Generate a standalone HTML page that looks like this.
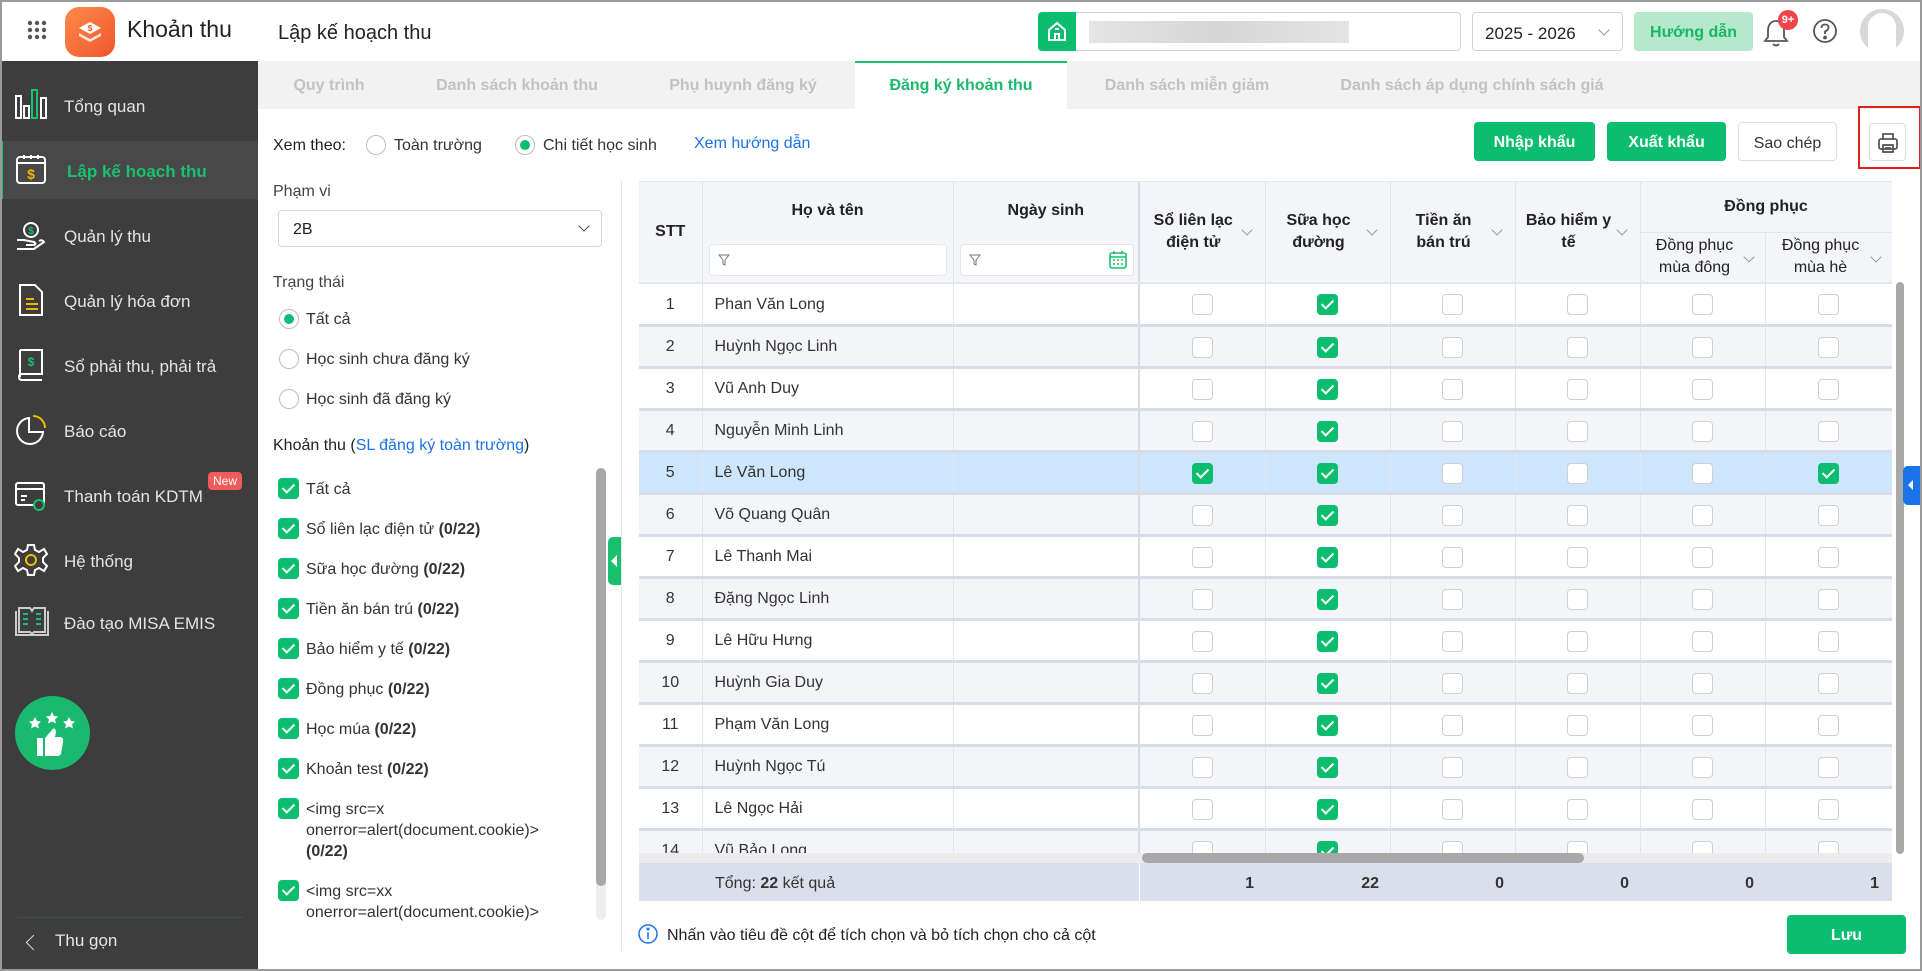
<!DOCTYPE html>
<html><head><meta charset="utf-8">
<style>
*{box-sizing:border-box;margin:0;padding:0}
body{width:1922px;height:971px;overflow:hidden;font-family:"Liberation Sans","DejaVu Sans",sans-serif;font-size:16px;color:#222;background:#fff;position:relative}
.a{position:absolute}
.frame{position:absolute;left:0;top:0;width:1922px;height:971px;border:2px solid #9a9a9a;pointer-events:none;z-index:50}
.side{left:0;top:61px;width:258px;height:910px;background:#3d3d3d}
.si{position:absolute;left:0;width:258px;height:58px;color:#e4e4e4;font-size:17px;line-height:62px;padding-left:64px}
.si svg{position:absolute;left:14px;top:12px}
.tabs{left:258px;top:61px;width:1664px;height:48px;background:#f2f2f2}
.tab{position:absolute;top:0;height:48px;line-height:50px;color:#c2c2c2;font-size:16px;font-weight:bold;transform:translateX(-50%);white-space:nowrap}
.btn{position:absolute;top:122px;height:39px;border-radius:4px;line-height:41px;text-align:center;font-size:16px;font-weight:bold;color:#fff;background:#0cbd6f}
.radio{position:absolute;width:20px;height:20px;border:1px solid #bdbdbd;border-radius:50%;background:#fff}
.radio.on::after{content:"";position:absolute;left:4px;top:4px;width:10px;height:10px;border-radius:50%;background:#0cbd6f}
.cb{display:inline-block;width:21px;height:21px;border:1px solid #cfcfcf;border-radius:4px;background:#fff;vertical-align:middle;position:relative}
.cb.on{background:#0cbd6f;border-color:#0cbd6f}
.cb.on::after{content:"";position:absolute;left:6px;top:2px;width:5px;height:10px;border:solid #fff;border-width:0 2px 2px 0;transform:rotate(45deg)}
.lc{position:absolute;left:278px;font-size:16px;color:#333;line-height:21px}
.lc .cb{position:absolute;left:0;top:0}
.lc span.t{position:absolute;left:28px;top:1px;white-space:nowrap}
table{border-collapse:collapse;table-layout:fixed}
td,th{overflow:hidden;white-space:nowrap}
.tb td{height:42px;border-bottom:3px solid #d9dbe8;border-right:1px solid #e3e5ee;font-size:16px;color:#333;padding-top:2px}
.tb tr:nth-child(even) td{background:#f4f5f9}
.tb tr.sel td{background:#cde6fb}
.tb td.c{text-align:center}
.tb td.n{padding-left:12px}
.hd{background:#f4f5f8;font-weight:bold;font-size:16px;color:#222;text-align:center}
.chev{position:absolute;width:8px;height:8px;border-right:1.5px solid #999;border-bottom:1.5px solid #999;transform:rotate(45deg)}
</style></head><body>

<div class="a" style="left:0;top:0;width:1922px;height:61px;background:#fff;box-shadow:0 1px 3px rgba(0,0,0,.08)"></div>
<svg class="a" style="left:27px;top:20px" width="20" height="20" viewBox="0 0 20 20" fill="#555"><circle cx="3" cy="3" r="2.2"/><circle cx="10" cy="3" r="2.2"/><circle cx="17" cy="3" r="2.2"/><circle cx="3" cy="10" r="2.2"/><circle cx="10" cy="10" r="2.2"/><circle cx="17" cy="10" r="2.2"/><circle cx="3" cy="17" r="2.2"/><circle cx="10" cy="17" r="2.2"/><circle cx="17" cy="17" r="2.2"/></svg>
<div class="a" style="left:65px;top:7px;width:50px;height:50px;border-radius:14px;background:linear-gradient(135deg,#ff8a4c,#f0562c)"></div>
<svg class="a" style="left:74px;top:16px" width="32" height="32" viewBox="0 0 32 32"><path d="M16 6 L27 12 L16 18 L5 12Z" fill="#fff"/><path d="M5 17 L16 23 L27 17 L27 20 L16 26 L5 20Z" fill="#fde3d5"/><text x="16" y="15" font-size="8" fill="#f0562c" text-anchor="middle" font-family="Liberation Sans" font-weight="bold">$</text></svg>
<div class="a" style="left:127px;top:16px;font-size:23px;color:#222">Khoản thu</div>
<div class="a" style="left:278px;top:22px;font-size:20px;color:#222">Lập kế hoạch thu</div>

<div class="a" style="left:1038px;top:12px;width:423px;height:39px;border:1px solid #d0d0d0;border-radius:4px;background:#fff"></div>
<div class="a" style="left:1038px;top:12px;width:38px;height:39px;background:#0cbd6f;border-radius:4px 0 0 4px"></div>
<svg class="a" style="left:1046px;top:20px" width="22" height="22" viewBox="0 0 22 22" fill="none" stroke="#fff" stroke-width="2"><path d="M3 10 L11 3 L19 10 V20 H3Z"/><path d="M9 20 V14 H13 V20"/><path d="M9 9 H13"/></svg>
<div class="a" style="left:1089px;top:21px;width:260px;height:22px;background:linear-gradient(90deg,#e4e4e4,#d6d6d6,#e4e4e4)"></div>
<div class="a" style="left:1472px;top:12px;width:151px;height:39px;border:1px solid #d0d0d0;border-radius:4px;font-size:17px;line-height:41px;padding-left:12px;color:#222">2025 - 2026</div>
<div class="chev" style="left:1600px;top:26px"></div>
<div class="a" style="left:1634px;top:12px;width:119px;height:39px;background:#b6e8cb;border-radius:4px;text-align:center;line-height:41px;color:#14b866;font-weight:bold;font-size:16px">Hướng dẫn</div>
<svg class="a" style="left:1762px;top:16px" width="28" height="32" viewBox="0 0 28 32" fill="none" stroke="#555" stroke-width="1.8"><path d="M14 5 C8 5 6 10 6 15 V21 L3 25 H25 L22 21 V15 C22 10 20 5 14 5Z"/><path d="M11 28 Q14 31 17 28"/></svg>
<div class="a" style="left:1778px;top:10px;width:20px;height:20px;border-radius:50%;background:#f0444a;color:#fff;font-size:11px;font-weight:bold;text-align:center;line-height:20px">9+</div>
<svg class="a" style="left:1812px;top:18px" width="26" height="26" viewBox="0 0 26 26" fill="none" stroke="#555" stroke-width="1.8"><circle cx="13" cy="13" r="11"/><path d="M9.5 10 Q9.5 6.5 13 6.5 Q16.5 6.5 16.5 9.5 Q16.5 12 13 13.5 V16"/><circle cx="13" cy="19.5" r="1" fill="#555"/></svg>
<div class="a" style="left:1860px;top:9px;width:44px;height:44px;border-radius:50%;background:#d8d8d8"></div>
<div class="a" style="left:1868px;top:13px;width:28px;height:40px;border-radius:14px 14px 4px 4px;background:#fff"></div>

<div class="a side"></div>
<div class="si" style="top:76px"><svg width="36" height="32" viewBox="0 0 36 32" fill="none" stroke="#fff" stroke-width="2"><rect x="2" y="8" width="5" height="22"/><rect x="10" y="18" width="5" height="12"/><rect x="18" y="2" width="5" height="28" stroke="#19c06f"/><rect x="27" y="10" width="5" height="20"/></svg>Tổng quan</div>
<div class="si" style="top:141px;background:#484848;color:#19c06f;font-weight:bold;border-left:3px solid #19c06f"><svg width="34" height="34" viewBox="0 0 34 34" fill="none" stroke="#fff" stroke-width="2" style="left:11px"><rect x="3" y="4" width="28" height="26" rx="3"/><path d="M3 10 H31"/><path d="M10 2 V6 M17 2 V6 M24 2 V6"/><text x="17" y="26" fill="#f0b800" stroke="none" font-size="14" text-anchor="middle" font-family="Liberation Sans" font-weight="bold">$</text></svg>Lập kế hoạch thu</div>
<div class="si" style="top:206px"><svg width="34" height="34" viewBox="0 0 34 34" fill="none" stroke="#fff" stroke-width="2"><circle cx="17" cy="12" r="7"/><path d="M3 22 H10 L20 24 Q23 26 20 27 L12 27 M3 31 H20 L30 24 Q28 21 25 23"/><text x="17" y="16" fill="#19c06f" stroke="none" font-size="10" text-anchor="middle" font-family="Liberation Sans" font-weight="bold">$</text></svg>Quản lý thu</div>
<div class="si" style="top:271px"><svg width="34" height="34" viewBox="0 0 34 34" fill="none" stroke="#fff" stroke-width="2"><path d="M6 2 H21 L28 9 V32 H6Z"/><path d="M12 16 H20 M12 21 H24 M12 26 H24" stroke="#f0b800"/></svg>Quản lý hóa đơn</div>
<div class="si" style="top:336px"><svg width="34" height="34" viewBox="0 0 34 34" fill="none" stroke="#fff" stroke-width="2"><path d="M6 2 H28 V26 H8 Q5 26 5 29 Q5 32 8 32 H28 M6 2 V29"/><text x="17" y="18" fill="#19c06f" stroke="none" font-size="12" text-anchor="middle" font-family="Liberation Sans" font-weight="bold">$</text></svg>Sổ phải thu, phải trả</div>
<div class="si" style="top:401px"><svg width="34" height="34" viewBox="0 0 34 34" fill="none" stroke="#fff" stroke-width="2"><path d="M15 5 A13 13 0 1 0 29 19 H15Z"/><path d="M19 3 A12 12 0 0 1 31 15" stroke="#f0b800"/></svg>Báo cáo</div>
<div class="si" style="top:466px"><svg width="34" height="34" viewBox="0 0 34 34" fill="none" stroke="#fff" stroke-width="2"><rect x="2" y="5" width="28" height="22" rx="2"/><path d="M2 11 H30 M7 18 H13 M7 22 H11"/><circle cx="25" cy="27" r="5" stroke="#19c06f" fill="#3d3d3d"/></svg>Thanh toán KDTM</div>
<div class="a" style="left:208px;top:472px;background:#f25b5b;color:#fff;font-size:12px;padding:2px 5px;border-radius:4px">New</div>
<div class="si" style="top:531px"><svg width="34" height="34" viewBox="0 0 34 34" fill="none" stroke="#fff" stroke-width="2"><path d="M14 2 H20 L21 7 L25 9 L30 6 L33 11 L29 15 V19 L33 23 L30 28 L25 25 L21 27 L20 32 H14 L13 27 L9 25 L4 28 L1 23 L5 19 V15 L1 11 L4 6 L9 9 L13 7Z"/><circle cx="17" cy="17" r="5" stroke="#f0b800"/></svg>Hệ thống</div>
<div class="si" style="top:593px"><svg width="36" height="34" viewBox="0 0 36 34" fill="none" stroke="#ccc" stroke-width="2"><path d="M2 6 V30 H34 V6 M5 3 H16 L18 6 L20 3 H31 V27 H20 L18 29 L16 27 H5Z"/><path d="M9 9 H14 M9 14 H14 M9 19 H14 M22 9 H27 M22 14 H27 M22 19 H27" stroke="#19c06f"/></svg>Đào tạo MISA EMIS</div>
<div class="a" style="left:15px;top:696px;width:75px;height:74px;border-radius:50%;background:#19b96e"></div>
<svg class="a" style="left:25px;top:712px" width="56" height="46" viewBox="0 0 56 46" fill="#fff"><path d="M10 5 l2 4 4 .5 -3 3 1 4 -4-2 -4 2 1-4 -3-3 4-.5z"/><path d="M27 0 l2 4 4 .5 -3 3 1 4 -4-2 -4 2 1-4 -3-3 4-.5z"/><path d="M44 5 l2 4 4 .5 -3 3 1 4 -4-2 -4 2 1-4 -3-3 4-.5z"/><rect x="12" y="26" width="6" height="18"/><path d="M20 44 V26 L27 18 Q30 14 31 20 L30 25 H36 Q39 26 38 30 L36 42 Q35 44 32 44Z"/></svg>
<div class="a" style="left:17px;top:917px;width:226px;height:1px;background:#3f4a5c"></div>
<div class="chev" style="left:28px;top:937px;transform:rotate(135deg);border-color:#ddd;width:11px;height:11px"></div>
<div class="a" style="left:55px;top:931px;color:#e6e6e6;font-size:17px">Thu gọn</div>

<div class="a tabs"></div>
<div class="a" style="left:855px;top:61px;width:212px;height:48px;background:#fff;border-top:2px solid #19c06f"></div>
<div class="tab" style="left:329px;top:61px">Quy trình</div>
<div class="tab" style="left:517px;top:61px">Danh sách khoản thu</div>
<div class="tab" style="left:743px;top:61px">Phụ huynh đăng ký</div>
<div class="tab" style="left:961px;top:61px;color:#19b96e">Đăng ký khoản thu</div>
<div class="tab" style="left:1187px;top:61px">Danh sách miễn giảm</div>
<div class="tab" style="left:1472px;top:61px">Danh sách áp dụng chính sách giá</div>

<div class="a" style="left:273px;top:137px;font-size:16px">Xem theo:</div>
<div class="radio" style="left:366px;top:135px"></div>
<div class="a" style="left:394px;top:137px;color:#333">Toàn trường</div>
<div class="radio on" style="left:515px;top:135px"></div>
<div class="a" style="left:543px;top:137px;color:#333">Chi tiết học sinh</div>
<div class="a" style="left:694px;top:135px;color:#1a73e8">Xem hướng dẫn</div>
<div class="btn" style="left:1474px;width:121px">Nhập khẩu</div>
<div class="btn" style="left:1607px;width:119px">Xuất khẩu</div>
<div class="btn" style="left:1738px;width:99px;background:#fff;border:1px solid #ddd;color:#333;font-weight:normal">Sao chép</div>
<div class="a" style="left:1869px;top:123px;width:37px;height:38px;border:1px solid #ddd;border-radius:4px"></div>
<svg class="a" style="left:1876px;top:131px" width="24" height="24" viewBox="0 0 24 24" fill="none" stroke="#555" stroke-width="1.8"><path d="M7 8 V3 H17 V8"/><rect x="3" y="8" width="18" height="10" rx="2"/><rect x="7" y="14" width="10" height="7"/><path d="M9 17 H15"/></svg>
<div class="a" style="left:1858px;top:106px;width:63px;height:63px;border:2px solid #e02020"></div>

<div class="a" style="left:273px;top:183px;color:#444">Phạm vi</div>
<div class="a" style="left:278px;top:210px;width:324px;height:37px;border:1px solid #d7d7d7;border-radius:4px;padding-left:14px;line-height:38px;font-size:16px">2B</div>
<div class="chev" style="left:580px;top:222px;border-color:#444"></div>
<div class="a" style="left:273px;top:274px;color:#444">Trạng thái</div>
<div class="radio on" style="left:279px;top:309px"></div><div class="a" style="left:306px;top:311px;color:#333">Tất cả</div>
<div class="radio" style="left:279px;top:349px"></div><div class="a" style="left:306px;top:351px;color:#333">Học sinh chưa đăng ký</div>
<div class="radio" style="left:279px;top:389px"></div><div class="a" style="left:306px;top:391px;color:#333">Học sinh đã đăng ký</div>
<div class="a" style="left:273px;top:437px">Khoản thu (<span style="color:#1a73e8">SL đăng ký toàn trường</span>)</div>
<div class="lc" style="top:478px"><i class="cb on"></i><span class="t">Tất cả</span></div>
<div class="lc" style="top:518px"><i class="cb on"></i><span class="t">Sổ liên lạc điện tử <b>(0/22)</b></span></div>
<div class="lc" style="top:558px"><i class="cb on"></i><span class="t">Sữa học đường <b>(0/22)</b></span></div>
<div class="lc" style="top:598px"><i class="cb on"></i><span class="t">Tiền ăn bán trú <b>(0/22)</b></span></div>
<div class="lc" style="top:638px"><i class="cb on"></i><span class="t">Bảo hiểm y tế <b>(0/22)</b></span></div>
<div class="lc" style="top:678px"><i class="cb on"></i><span class="t">Đồng phục <b>(0/22)</b></span></div>
<div class="lc" style="top:718px"><i class="cb on"></i><span class="t">Học múa <b>(0/22)</b></span></div>
<div class="lc" style="top:758px"><i class="cb on"></i><span class="t">Khoản test <b>(0/22)</b></span></div>
<div class="lc" style="top:798px"><i class="cb on"></i><span class="t">&lt;img src=x<br>onerror=alert(document.cookie)&gt;<br><b>(0/22)</b></span></div>
<div class="lc" style="top:880px"><i class="cb on"></i><span class="t">&lt;img src=xx<br>onerror=alert(document.cookie)&gt;</span></div>
<div class="a" style="left:596px;top:468px;width:10px;height:452px;background:#eee;border-radius:5px"></div>
<div class="a" style="left:596px;top:468px;width:10px;height:418px;background:#a8a8a8;border-radius:5px"></div>
<div class="a" style="left:621px;top:181px;width:1px;height:770px;background:#e6e6e6"></div>
<div class="a" style="left:608px;top:537px;width:13px;height:48px;background:#19c06f;border-radius:5px 0 0 5px"></div>
<div class="a" style="left:611px;top:555px;width:0;height:0;border-top:6px solid transparent;border-bottom:6px solid transparent;border-right:6px solid #fff"></div>

<div class="a" style="left:639px;top:181px;width:1253px;height:682px;overflow:hidden;border-top:1px solid #e3e5ee">
<table class="tb" style="width:1253px">
<colgroup><col style="width:63px"><col style="width:251px"><col style="width:186px"><col style="width:126px"><col style="width:125px"><col style="width:125px"><col style="width:125px"><col style="width:125px"><col style="width:127px"></colgroup>
<tr style="height:50px">
<th class="hd" rowspan="2" style="border-right:1px solid #e3e5ee;border-bottom:2px solid #e3e5ee">STT</th>
<th class="hd" rowspan="2" style="border-right:1px solid #e3e5ee;border-bottom:2px solid #e3e5ee;vertical-align:top;padding-top:20px;position:relative">Họ và tên<div style="position:absolute;left:6px;top:62px;width:238px;height:32px;background:#fff;border:1px solid #e3e5ee;border-radius:4px"><svg style="position:absolute;left:8px;top:9px" width="12" height="12" viewBox="0 0 12 12" fill="none" stroke="#777"><path d="M1 1 H11 L7 6 V11 L5 10 V6Z"/></svg></div></th>
<th class="hd" rowspan="2" style="border-right:2px solid #d9dbe8;border-bottom:2px solid #e3e5ee;vertical-align:top;padding-top:20px;position:relative">Ngày sinh<div style="position:absolute;left:6px;top:62px;width:174px;height:32px;background:#fff;border:1px solid #e3e5ee;border-radius:4px"><svg style="position:absolute;left:8px;top:9px" width="12" height="12" viewBox="0 0 12 12" fill="none" stroke="#777"><path d="M1 1 H11 L7 6 V11 L5 10 V6Z"/></svg><svg style="position:absolute;left:147px;top:5px" width="20" height="20" viewBox="0 0 20 20" fill="none" stroke="#19c06f" stroke-width="1.6"><rect x="2" y="3" width="16" height="15" rx="2"/><path d="M2 7 H18 M6 1 V4 M14 1 V4 M5 10 H7 M9 10 H11 M13 10 H15 M5 14 H7 M9 14 H11 M13 14 H15"/></svg></div></th>
<th class="hd" rowspan="2" style="border-right:1px solid #e3e5ee;border-bottom:2px solid #e3e5ee;line-height:22px;position:relative;padding-right:18px">Sổ liên lạc<br>điện tử<i class="chev" style="right:14px;top:44px"></i></th>
<th class="hd" rowspan="2" style="border-right:1px solid #e3e5ee;border-bottom:2px solid #e3e5ee;line-height:22px;position:relative;padding-right:18px">Sữa học<br>đường<i class="chev" style="right:14px;top:44px"></i></th>
<th class="hd" rowspan="2" style="border-right:1px solid #e3e5ee;border-bottom:2px solid #e3e5ee;line-height:22px;position:relative;padding-right:18px">Tiền ăn<br>bán trú<i class="chev" style="right:14px;top:44px"></i></th>
<th class="hd" rowspan="2" style="border-right:1px solid #e3e5ee;border-bottom:2px solid #e3e5ee;line-height:22px;position:relative;padding-right:18px">Bảo hiểm y<br>tế<i class="chev" style="right:14px;top:44px"></i></th>
<th class="hd" colspan="2" style="border-right:1px solid #e3e5ee;border-bottom:1px solid #e3e5ee">Đồng phục</th>
</tr>
<tr style="height:51px">
<th class="hd" style="font-weight:normal;line-height:22px;border-right:1px solid #e3e5ee;border-bottom:2px solid #e3e5ee;position:relative;padding-right:16px">Đồng phục<br>mùa đông<i class="chev" style="right:12px;top:20px"></i></th>
<th class="hd" style="font-weight:normal;line-height:22px;border-right:1px solid #e3e5ee;border-bottom:2px solid #e3e5ee;position:relative;padding-right:16px">Đồng phục<br>mùa hè<i class="chev" style="right:12px;top:20px"></i></th>
</tr>
<tr><td class="c">1</td><td class="n">Phan Văn Long</td><td style="border-right:2px solid #d9dbe8"></td><td class="c"><i class="cb"></i></td><td class="c"><i class="cb on"></i></td><td class="c"><i class="cb"></i></td><td class="c"><i class="cb"></i></td><td class="c"><i class="cb"></i></td><td class="c"><i class="cb"></i></td></tr>
<tr><td class="c">2</td><td class="n">Huỳnh Ngọc Linh</td><td style="border-right:2px solid #d9dbe8"></td><td class="c"><i class="cb"></i></td><td class="c"><i class="cb on"></i></td><td class="c"><i class="cb"></i></td><td class="c"><i class="cb"></i></td><td class="c"><i class="cb"></i></td><td class="c"><i class="cb"></i></td></tr>
<tr><td class="c">3</td><td class="n">Vũ Anh Duy</td><td style="border-right:2px solid #d9dbe8"></td><td class="c"><i class="cb"></i></td><td class="c"><i class="cb on"></i></td><td class="c"><i class="cb"></i></td><td class="c"><i class="cb"></i></td><td class="c"><i class="cb"></i></td><td class="c"><i class="cb"></i></td></tr>
<tr><td class="c">4</td><td class="n">Nguyễn Minh Linh</td><td style="border-right:2px solid #d9dbe8"></td><td class="c"><i class="cb"></i></td><td class="c"><i class="cb on"></i></td><td class="c"><i class="cb"></i></td><td class="c"><i class="cb"></i></td><td class="c"><i class="cb"></i></td><td class="c"><i class="cb"></i></td></tr>
<tr class="sel"><td class="c">5</td><td class="n">Lê Văn Long</td><td style="border-right:2px solid #d9dbe8"></td><td class="c"><i class="cb on"></i></td><td class="c"><i class="cb on"></i></td><td class="c"><i class="cb"></i></td><td class="c"><i class="cb"></i></td><td class="c"><i class="cb"></i></td><td class="c"><i class="cb on"></i></td></tr>
<tr><td class="c">6</td><td class="n">Võ Quang Quân</td><td style="border-right:2px solid #d9dbe8"></td><td class="c"><i class="cb"></i></td><td class="c"><i class="cb on"></i></td><td class="c"><i class="cb"></i></td><td class="c"><i class="cb"></i></td><td class="c"><i class="cb"></i></td><td class="c"><i class="cb"></i></td></tr>
<tr><td class="c">7</td><td class="n">Lê Thanh Mai</td><td style="border-right:2px solid #d9dbe8"></td><td class="c"><i class="cb"></i></td><td class="c"><i class="cb on"></i></td><td class="c"><i class="cb"></i></td><td class="c"><i class="cb"></i></td><td class="c"><i class="cb"></i></td><td class="c"><i class="cb"></i></td></tr>
<tr><td class="c">8</td><td class="n">Đặng Ngọc Linh</td><td style="border-right:2px solid #d9dbe8"></td><td class="c"><i class="cb"></i></td><td class="c"><i class="cb on"></i></td><td class="c"><i class="cb"></i></td><td class="c"><i class="cb"></i></td><td class="c"><i class="cb"></i></td><td class="c"><i class="cb"></i></td></tr>
<tr><td class="c">9</td><td class="n">Lê Hữu Hưng</td><td style="border-right:2px solid #d9dbe8"></td><td class="c"><i class="cb"></i></td><td class="c"><i class="cb on"></i></td><td class="c"><i class="cb"></i></td><td class="c"><i class="cb"></i></td><td class="c"><i class="cb"></i></td><td class="c"><i class="cb"></i></td></tr>
<tr><td class="c">10</td><td class="n">Huỳnh Gia Duy</td><td style="border-right:2px solid #d9dbe8"></td><td class="c"><i class="cb"></i></td><td class="c"><i class="cb on"></i></td><td class="c"><i class="cb"></i></td><td class="c"><i class="cb"></i></td><td class="c"><i class="cb"></i></td><td class="c"><i class="cb"></i></td></tr>
<tr><td class="c">11</td><td class="n">Phạm Văn Long</td><td style="border-right:2px solid #d9dbe8"></td><td class="c"><i class="cb"></i></td><td class="c"><i class="cb on"></i></td><td class="c"><i class="cb"></i></td><td class="c"><i class="cb"></i></td><td class="c"><i class="cb"></i></td><td class="c"><i class="cb"></i></td></tr>
<tr><td class="c">12</td><td class="n">Huỳnh Ngọc Tú</td><td style="border-right:2px solid #d9dbe8"></td><td class="c"><i class="cb"></i></td><td class="c"><i class="cb on"></i></td><td class="c"><i class="cb"></i></td><td class="c"><i class="cb"></i></td><td class="c"><i class="cb"></i></td><td class="c"><i class="cb"></i></td></tr>
<tr><td class="c">13</td><td class="n">Lê Ngọc Hải</td><td style="border-right:2px solid #d9dbe8"></td><td class="c"><i class="cb"></i></td><td class="c"><i class="cb on"></i></td><td class="c"><i class="cb"></i></td><td class="c"><i class="cb"></i></td><td class="c"><i class="cb"></i></td><td class="c"><i class="cb"></i></td></tr>
<tr><td class="c">14</td><td class="n">Vũ Bảo Long</td><td style="border-right:2px solid #d9dbe8"></td><td class="c"><i class="cb"></i></td><td class="c"><i class="cb on"></i></td><td class="c"><i class="cb"></i></td><td class="c"><i class="cb"></i></td><td class="c"><i class="cb"></i></td><td class="c"><i class="cb"></i></td></tr>
</table>
</div>
<div class="a" style="left:639px;top:853px;width:1253px;height:10px;background:#ececec"></div>
<div class="a" style="left:1142px;top:853px;width:442px;height:10px;background:#a8a8a8;border-radius:5px"></div>
<div class="a" style="left:1896px;top:282px;width:8px;height:572px;background:#a8a8a8;border-radius:4px"></div>
<div class="a" style="left:639px;top:863px;width:1253px;height:38px;background:#d9e0ec"></div>
<div class="a" style="left:715px;top:875px;font-size:16px;color:#333">Tổng: <b>22</b> kết quả</div>
<div class="a" style="left:1139px;top:863px;width:1px;height:38px;background:#fff"></div>
<div class="a" style="left:1139px;top:875px;width:753px;font-size:16px;font-weight:bold;color:#333">
<span class="a" style="left:0;width:115px;text-align:right">1</span>
<span class="a" style="left:126px;width:114px;text-align:right">22</span>
<span class="a" style="left:251px;width:114px;text-align:right">0</span>
<span class="a" style="left:376px;width:114px;text-align:right">0</span>
<span class="a" style="left:501px;width:114px;text-align:right">0</span>
<span class="a" style="left:626px;width:114px;text-align:right">1</span>
</div>
<svg class="a" style="left:638px;top:924px" width="20" height="20" viewBox="0 0 20 20" fill="none" stroke="#1a73e8" stroke-width="1.5"><circle cx="10" cy="10" r="9"/><path d="M10 8 V15"/><circle cx="10" cy="5" r="0.8" fill="#1a73e8"/></svg>
<div class="a" style="left:667px;top:927px;font-size:16px;color:#222">Nhấn vào tiêu đề cột để tích chọn và bỏ tích chọn cho cả cột</div>
<div class="btn" style="left:1787px;top:915px;width:119px;height:39px">Lưu</div>
<div class="a" style="left:1903px;top:466px;width:17px;height:39px;background:#1a73e8;border-radius:5px 0 0 5px"></div>
<div class="a" style="left:1908px;top:480px;width:0;height:0;border-top:5px solid transparent;border-bottom:5px solid transparent;border-right:5px solid #fff"></div>

<div class="frame"></div>
</body></html>
